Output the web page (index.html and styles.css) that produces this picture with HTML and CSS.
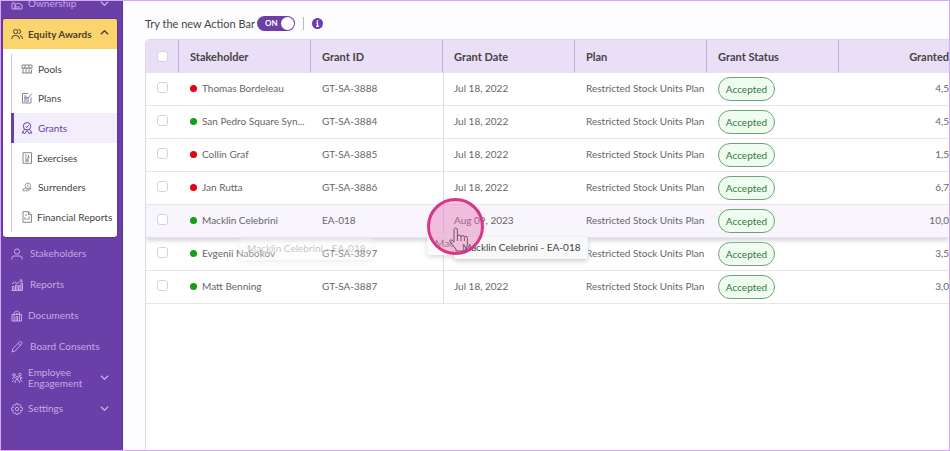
FILE: index.html
```html
<!DOCTYPE html>
<html lang="en">
<head>
<meta charset="utf-8">
<title>Grants</title>
<link rel="stylesheet" href="styles.css">
</head>
<body>
<div class="app">
  <nav class="sidebar" aria-label="Main">
    <a class="nav-item nav-first" href="#">
      <svg class="icon" viewBox="0 0 12 12"><path d="M1 5h3v6H1zM4 11V7l3-2 4 2v4zM2 3l3-2 4 1M6 11V8M8 11V8"/></svg>
      <span class="label">Ownership</span>
      <svg class="chevron" viewBox="0 0 10 10"><path d="M1 3l4 4 4-4"/></svg>
    </a>
    <section class="group">
      <a class="group-head" href="#">
        <svg class="icon" viewBox="0 0 12 12"><circle cx="4.6" cy="3.6" r="2.1"/><path d="M1 11V9.600Q1 7.500 4.600 7.500T8.200 9.600V11M7.500 1.500a2.100 2.100 0 0 1 0 4.200M9 7.500q2.300.5 2.300 2.300V11"/></svg>
        <span class="label">Equity Awards</span>
        <svg class="chevron" viewBox="0 0 10 10"><path d="M1 7l4-4 4 4"/></svg>
      </a>
      <ul class="sub">
        <li><a href="#"><svg class="sub-icon" viewBox="0 0 12 12"><path d="M1 2h10v3H1zM1 5l1 1.500L3.500 5 5 6.500 6.500 5 8 6.500 9.500 5 11 6.500M2 7v3M5 7v3M8 7v3M10.500 7v3M1 10h10M4 2v3M8 2v3"/></svg>Pools</a></li>
        <li><a href="#"><svg class="sub-icon" viewBox="0 0 12 12"><path class="tint" d="M3 5h5v5H3z"/><path d="M7 1.500H1.500v9.500h8.500V5.500M3 4h2M3 6h3M5.500 4.500l1.500 1.500L11 1.500"/></svg>Plans</a></li>
        <li class="current"><a href="#" aria-current="page"><svg class="sub-icon" viewBox="0 0 12 12"><circle cx="6" cy="4.300" r="3.700"/><path d="M4.500 4.300l1.200 1.200 2-2.200M3.500 7.300L1 11l2-.2.7 1L6 8.300l2.300 3.500.7-1 2 .2-2.500-3.700"/></svg>Grants</a></li>
        <li><a class="tight" href="#"><svg class="sub-icon" viewBox="0 0 12 12"><path d="M2 .7h8.500v10.600H2zM4 3h2M4 5h1.500M4 7h4M4 9h4M7.500 3v3M6.500 5.500h2M6 7v3"/></svg>Exercises</a></li>
        <li><a href="#"><svg class="sub-icon small" viewBox="0 0 12 12"><circle cx="7" cy="4.500" r="3.300"/><path d="M7 3v3M1 8.500l3-1 3 1.500 4-1.500-3 3H1z"/></svg>Surrenders</a></li>
        <li><a class="tight" href="#"><svg class="sub-icon" viewBox="0 0 12 12"><path d="M2 .7h5.500l3 3v7.600H2zM7.500.7v3h3M4 9V6M6 9V7.500M8 9V5.500M4 4h2"/></svg>Financial Reports</a></li>
      </ul>
    </section>
    <div class="lower">
      <a class="nav-item" href="#"><svg class="icon" viewBox="0 0 12 12"><circle cx="6" cy="3.500" r="2.600"/><path d="M1 11.500V10q0-2 2-2h6q2 0 2 2v1.500"/></svg><span class="label wide">Stakeholders</span></a>
      <a class="nav-item" href="#"><svg class="icon" viewBox="0 0 12 12"><path d="M.5 11.500h11M1.500 11V7.500h1.500V11M4.500 11V6H6v5M7.500 11V6.500H9V11M10 11V4h1.500v7M1 5l2.500-2L6 4.500 11 1M9 .8l2 .2-.2 2"/></svg><span class="label wide">Reports</span></a>
      <a class="nav-item" href="#"><svg class="icon" viewBox="0 0 12 12"><path d="M1 4.500h9.500V11H1zM3 4.500V11M8.500 4.500V11M3 4.500V2.500L5.700 1l2.800 1.500v2M5 11V6.500h1.500V11M5 3.500h1.500"/></svg><span class="label">Documents</span></a>
      <a class="nav-item" href="#"><svg class="icon" viewBox="0 0 12 12"><path d="M1 11l.7-3.200L8.500 1q1.200-.8 2 0 .9.900.2 2L4 10zM7.200 2.300l2.300 2.300"/></svg><span class="label wide">Board Consents</span></a>
      <a class="nav-item" href="#"><svg class="icon" viewBox="0 0 12 12"><circle cx="3" cy="3" r="1.300"/><circle cx="9" cy="2.500" r="1.300"/><circle cx="6" cy="5.500" r="1.300"/><path d="M1 7l1.500-1.500 1.500 1M4 11l.5-2.500L6 7.500l2 1 .5 2.500M10 7L9 4.500 7.500 5M1 10l2-2M11 10L9.500 7.500 11 5"/></svg><span class="label">Employee Engagement</span><svg class="chevron" viewBox="0 0 10 10"><path d="M1 3l4 4 4-4"/></svg></a>
      <a class="nav-item" href="#"><svg class="icon" viewBox="0 0 12 12"><path d="M5 .7h2l.4 1.500 1.300-.8 1.500 1.500-.8 1.400 1.900.5v2.400l-1.900.5.8 1.400-1.500 1.500-1.300-.8L7 11.300H5l-.4-1.500-1.300.8-1.500-1.500.8-1.400-1.900-.5V4.800l1.900-.5-.8-1.400 1.500-1.500 1.300.8z"/><circle cx="6" cy="6" r="1.700"/></svg><span class="label">Settings</span><svg class="chevron" viewBox="0 0 10 10"><path d="M1 3l4 4 4-4"/></svg></a>
    </div>
  </nav>
  <main class="content">
    <div class="toolbar">
      <label for="bar">Try the new Action Bar</label>
      <span class="switch"><input id="bar" type="checkbox" role="switch" checked><span class="on">ON</span></span>
      <span class="divider"></span>
      <button class="info" type="button" aria-label="Information"><svg viewBox="0 0 12 12"><circle cx="6" cy="6" r="6"/><path d="M6 2.500v1.500M4.800 5.500H6V9M4.600 9h2.800"/></svg></button>
    </div>
    <div class="grid">
      <table>
        <colgroup><col class="c-check"><col class="c-data"><col class="c-data"><col class="c-data"><col class="c-data"><col class="c-data"><col></colgroup>
        <thead>
          <tr><th><input type="checkbox" aria-label="Select all"></th><th>Stakeholder</th><th>Grant ID</th><th>Grant Date</th><th>Plan</th><th>Grant Status</th><th class="num">Granted</th></tr>
        </thead>
        <tbody>
          <tr><td><input type="checkbox" aria-label="Select Thomas Bordeleau"></td><td><i class="dot red"></i>Thomas Bordeleau</td><td>GT-SA-3888</td><td>Jul 18, 2022</td><td>Restricted Stock Units Plan</td><td><span class="pill">Accepted</span></td><td class="num">4,5</td></tr>
          <tr><td><input type="checkbox" aria-label="Select San Pedro Square"></td><td><i class="dot"></i>San Pedro Square Syn...</td><td>GT-SA-3884</td><td>Jul 18, 2022</td><td>Restricted Stock Units Plan</td><td><span class="pill">Accepted</span></td><td class="num">4,5</td></tr>
          <tr><td><input type="checkbox" aria-label="Select Collin Graf"></td><td><i class="dot red"></i>Collin Graf</td><td>GT-SA-3885</td><td>Jul 18, 2022</td><td>Restricted Stock Units Plan</td><td><span class="pill">Accepted</span></td><td class="num">1,5</td></tr>
          <tr><td><input type="checkbox" aria-label="Select Jan Rutta"></td><td><i class="dot red"></i>Jan Rutta</td><td>GT-SA-3886</td><td>Jul 18, 2022</td><td>Restricted Stock Units Plan</td><td><span class="pill">Accepted</span></td><td class="num">6,7</td></tr>
          <tr class="active"><td><input type="checkbox" aria-label="Select Macklin Celebrini"></td><td><i class="dot"></i>Macklin Celebrini</td><td>EA-018</td><td class="anchor">Aug 09, 2023
            <div class="tip ghost">Macklin</div>
            <div class="tip">Macklin Celebrini - EA-018</div>
            <div class="pointer"><svg viewBox="0 0 24 26"><path d="M8 16V4q0-2 1.700-2t1.700 2v7q0-2 1.800-2t1.800 2q0-1.500 1.700-1.500t1.700 2q0-1.200 1.500-1.200t1.500 2V18q0 3-2 5v2H10v-2l-6-7q-.8-1.600.7-2t3.300 2M11.400 11v4M15 11v4M18.400 12v3"/></svg></div>
          </td><td>Restricted Stock Units Plan</td><td><span class="pill">Accepted</span></td><td class="num">10,0</td></tr>
          <tr><td><input type="checkbox" aria-label="Select Evgenii Nabokov"></td><td class="anchor"><i class="dot"></i>Evgenii Nabokov<div class="tip faded">Macklin Celebrini - EA-018</div></td><td>GT-SA-3897</td><td>Jul 18, 2022</td><td>Restricted Stock Units Plan</td><td><span class="pill">Accepted</span></td><td class="num">3,5</td></tr>
          <tr><td><input type="checkbox" aria-label="Select Matt Benning"></td><td><i class="dot"></i>Matt Benning</td><td>GT-SA-3887</td><td>Jul 18, 2022</td><td>Restricted Stock Units Plan</td><td><span class="pill">Accepted</span></td><td class="num">3,0</td></tr>
        </tbody>
      </table>
    </div>
  </main>
</div>
</body>
</html>
```
FILE: styles.css
```css
* { box-sizing: border-box; }
body { margin: 0; font-family: Lato, "Liberation Sans", sans-serif; font-size: 10px; color: #666; background: #fdfcff; }
a { color: inherit; text-decoration: none; }
svg { display: block; flex: none; fill: none; stroke: currentColor; stroke-width: 1; stroke-linejoin: round; }
.app { display: flex; height: 100vh; border: 1px solid #d9a6ff; overflow: hidden; }

.sidebar { flex: none; width: 122px; padding: 0 5px 0 2px; background: #6b3fa8; color: #c3a9e4; border-right: 1px solid #5c3399; overflow: hidden; }
.nav-item { display: flex; align-items: center; height: 31px; padding: 0 8px; line-height: 11px; }
.nav-first { margin-top: -13px; }
.icon { width: 12px; height: 12px; }
.label { flex: 1; margin-left: 5px; }
.label.wide { margin-left: 7px; }
.chevron { width: 9px; height: 9px; stroke-width: 1.5; }
.group { background: #fff; border-radius: 3px; overflow: hidden; height: 218px; box-shadow: 0 0 2px #4a267f; }
.group-head { display: flex; align-items: center; height: 30px; padding: 0 8px; background: #fbd46d; color: #4a4030; font-weight: bold; }
.group-head .chevron { margin-bottom: 4px; }
.sub { display: grid; grid-auto-rows: 1fr; height: 178px; margin: 5px 0 0 8px; padding: 0; list-style: none; color: #444; border-left: 1px solid #ccc; }
.sub li { display: grid; }
.sub a { display: flex; align-items: center; gap: 5px; padding-left: 9px; white-space: nowrap; }
.sub a.tight { gap: 4px; }
.sub .current { margin-left: -1px; background: #f3eefb; color: #6b3fa8; border-left: 3px solid #6b3fa8; }
.sub .current a { padding-left: 7px; }
.sub-icon { width: 12px; height: 12px; color: #888; stroke-width: 1; }
.current .sub-icon { color: #6b3fa8; }
.tint { fill: #c9b2ee; stroke: none; }
.sub-icon.small { padding: 1px; }
.lower { padding-top: 1px; }

.content { flex: 1; min-width: 0; display: flex; flex-direction: column; padding-left: 22px; }
.toolbar { display: flex; align-items: center; height: 38px; padding-top: 6px; color: #444; font-size: 11px; }
.switch { position: relative; margin-left: 2px; height: 15px; }
.switch input { appearance: none; display: flex; align-items: center; justify-content: flex-end; width: 38px; height: 15px; margin: 0; padding: 1px; border-radius: 8px; background: #6b3fa8; }
.switch input::after { content: ""; width: 13px; height: 13px; border-radius: 50%; background: #fff; }
.on { position: absolute; left: 8px; top: 0; line-height: 15px; font-size: 8px; font-weight: bold; color: #fff; pointer-events: none; }
.divider { width: 1px; height: 13px; margin: 0 8px; background: #bbb; }
.info { padding: 0; border: 0; background: none; color: #fff; }
.info svg { width: 11px; height: 11px; stroke-width: 1.5; }
.info circle { fill: #6b3fa8; stroke: none; }

.grid { flex: 1; border: 1px solid #ddd9e6; border-width: 1px 0 0 1px; border-top-left-radius: 5px; background: #fff; overflow: hidden; }
table { width: 100%; table-layout: fixed; border-collapse: separate; border-spacing: 0; }
.c-check { width: 33px; }
.c-data { width: 132px; }
th, td { height: 33px; padding: 0 0 0 11px; text-align: left; white-space: nowrap; border-bottom: 1px solid #e6e6ea; }
th { font-size: 11px; color: #444; background: #e9dff7; border-right: 1px solid #c0b0de; }
td { padding-bottom: 3px; }
td:nth-child(4) { border-left: 1px solid #ddd; padding-left: 10px; }
th:last-child { border-right: 0; }
th.num, td.num { padding-left: 0; text-align: right; }
th input, td input { appearance: none; display: block; width: 11px; height: 11px; margin: 0; border: 1px solid #d5d2dc; border-radius: 3px; background: #fff; }
.dot { display: inline-block; width: 7px; height: 7px; margin-right: 5px; border-radius: 50%; background: #14a014; }
.dot.red { background: #e60012; }
.pill { display: block; width: 57px; height: 24px; margin-top: 2px; border: 1px solid #6fa274; border-radius: 12px; background: #effcf0; color: #32783a; text-align: center; line-height: 22px; }
.active { position: relative; z-index: 1; background: #f8f5fd; box-shadow: 0 3px 4px #dcd8e4; }
.anchor { position: relative; }
.tip { position: absolute; left: 10px; top: 32px; z-index: 3; height: 22px; padding: 0 8px; border-radius: 3px; background: #f8f8f8; color: #444; font-size: 10px; line-height: 21px; box-shadow: 0 2px 5px #ccc; }
.tip.ghost { left: -17px; top: 28px; z-index: 2; opacity: .7; }
.tip.faded { left: 60px; top: 0; opacity: .3; }
.pointer { position: absolute; left: -17px; top: -7px; z-index: 4; width: 57px; height: 57px; border: 3px solid #d93688; border-radius: 50%; background: rgba(226, 105, 174, .4); }
.pointer svg { width: 24px; height: 26px; margin: 25px 0 0 16px; color: #765070; }
```
